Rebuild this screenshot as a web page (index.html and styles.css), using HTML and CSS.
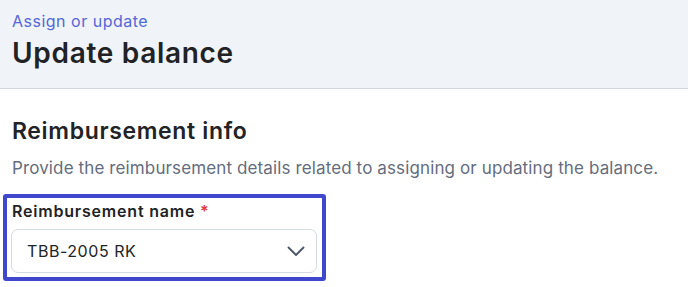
FILE: index.html
```html
<!DOCTYPE html>
<html lang="en">
<head>
<meta charset="utf-8">
<title>Update balance</title>
<link rel="stylesheet" href="styles.css">
</head>
<body>
<header class="page-header">
  <div class="eyebrow">Assign or update</div>
  <h1 class="title">Update balance</h1>
</header>
<main class="content">
  <h2 class="section-title">Reimbursement info</h2>
  <p class="section-desc">Provide the reimbursement details related to assigning or updating the balance.</p>
  <div class="field focus-ring">
    <label class="field-label">Reimbursement name <span class="req">*</span></label>
    <div class="select">
      <span class="select-value">TBB-2005 RK</span>
      <svg class="chevron" width="18" height="11" viewBox="0 0 18 11" aria-hidden="true"><path d="M1.5 1.5 L9 9 L16.5 1.5" fill="none" stroke="#4b5565" stroke-width="1.8" stroke-linecap="round" stroke-linejoin="round"/></svg>
    </div>
  </div>
</main>
</body>
</html>
```
FILE: styles.css
```css
* { box-sizing: border-box; }
html, body { margin: 0; padding: 0; background: #ffffff; }
body { font-family: Inter, "Noto Sans", sans-serif; color: #222326; }
.page-header {
  background: #f0f3f8;
  border-bottom: 1px solid #d3d8e2;
  padding: 11px 12px 0;
  height: 89px;
}
.eyebrow { font-size: 16px; line-height: 20px; color: #5467d8; letter-spacing: 0.5px; }
.title { margin: 5px 0 0; font-size: 28px; line-height: 34px; font-weight: 600; color: #212226; letter-spacing: 0.7px; }
.content { padding: 28px 12px 0; }
.section-title { margin: 0; font-size: 23px; line-height: 28px; font-weight: 600; color: #222326; letter-spacing: 0.65px; }
.section-desc { margin: 12px 0 0; font-size: 17px; line-height: 22px; color: #646d7e; letter-spacing: 0.12px; }
.field { width: 323px; margin: 15px 0 0 -9px; padding: 3px 5px 4px 4px; }
.focus-ring { border: 4px solid #3f48cc; border-radius: 3px; }
.field-label { display: block; font-size: 16px; line-height: 20px; font-weight: 600; color: #222326; padding-left: 1px; letter-spacing: 0.8px; }
.req { color: #e03b3b; }
.select {
  margin-top: 8px;
  height: 44px;
  border: 1px solid #d5d9e0;
  border-radius: 7px;
  display: flex;
  align-items: center;
  justify-content: space-between;
  padding: 0 11px 0 15px;
}
.select-value { font-size: 16px; color: #222326; letter-spacing: 0.55px; }
.chevron { display: block; }
```
